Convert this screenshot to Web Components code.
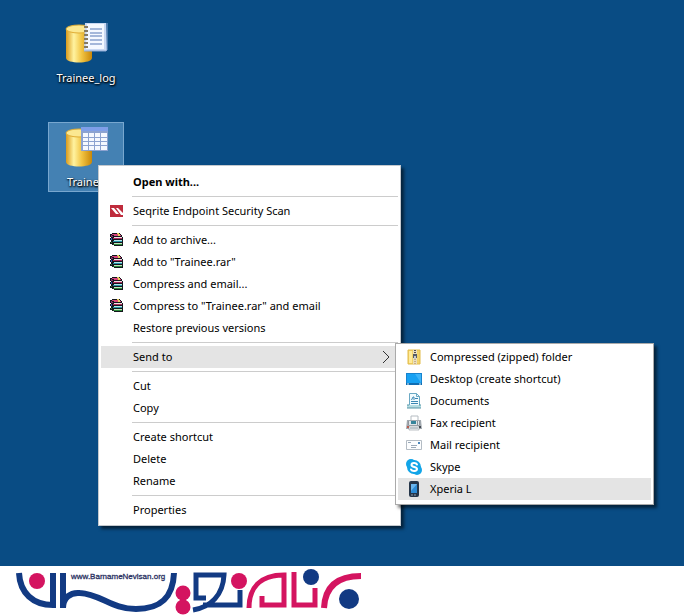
<!DOCTYPE html>
<html lang="en">
<head>
<meta charset="utf-8">
<title>Desktop</title>
<style>
  html, body { height: 100%; }
  body { margin: 0; background: #fff; font: 11px/22px "Noto Sans", "Open Sans", sans-serif; color: #000; }
</style>
</head>
<body>
<app-screen>
  <desktop-surface>
    <desktop-icon style="left:48px;top:18px" kind="log">Trainee_log</desktop-icon>
    <desktop-icon style="left:48px;top:122px" kind="table" selected>Trainee</desktop-icon>
    <context-menu style="left:98px;top:165px;width:303px" label="File menu">
      <menu-item bold>Open with...</menu-item>
      <menu-line></menu-line>
      <menu-item icon="seqrite">Seqrite Endpoint Security Scan</menu-item>
      <menu-line></menu-line>
      <menu-item icon="rar">Add to archive...</menu-item>
      <menu-item icon="rar">Add to "Trainee.rar"</menu-item>
      <menu-item icon="rar">Compress and email...</menu-item>
      <menu-item icon="rar">Compress to "Trainee.rar" and email</menu-item>
      <menu-item>Restore previous versions</menu-item>
      <menu-line></menu-line>
      <menu-item active arrow>Send to
        <context-menu slot="submenu" style="left:calc(100% - 3px);top:-3px;width:259px" flush label="Send to">
          <menu-item icon="zip">Compressed (zipped) folder</menu-item>
          <menu-item icon="desktop">Desktop (create shortcut)</menu-item>
          <menu-item icon="doc">Documents</menu-item>
          <menu-item icon="fax">Fax recipient</menu-item>
          <menu-item icon="mail">Mail recipient</menu-item>
          <menu-item icon="skype">Skype</menu-item>
          <menu-item icon="phone" active>Xperia L</menu-item>
        </context-menu>
      </menu-item>
      <menu-line></menu-line>
      <menu-item>Cut</menu-item>
      <menu-item>Copy</menu-item>
      <menu-line></menu-line>
      <menu-item>Create shortcut</menu-item>
      <menu-item>Delete</menu-item>
      <menu-item>Rename</menu-item>
      <menu-line></menu-line>
      <menu-item>Properties</menu-item>
    </context-menu>
  </desktop-surface>
  <brand-footer></brand-footer>
</app-screen>

<script>
const cylinder = `
  <defs><linearGradient id="g" x1="0" x2="1"><stop offset="0" stop-color="#d99a1c"/><stop offset=".3" stop-color="#fff3a0"/><stop offset=".6" stop-color="#f2c544"/><stop offset="1" stop-color="#c98708"/></linearGradient></defs>
  <path d="M4 10v29c0 6 26 6 26 0V10z" fill="url(#g)"/>
  <ellipse cx="17" cy="10" rx="13" ry="4" fill="#fbe891" stroke="#e0ad35"/>`;

const fileArt = {
  log: `<svg width="48" height="46" viewBox="0 0 48 46" aria-hidden="true">${cylinder}
    <path d="M23 4h21l1 28H22z" fill="#c9d8f2"/><path d="M25 5h17v25H24z" fill="#f4f8ff"/>
    <path d="M22 32h22l1-1V4" fill="none" stroke="#8ba7d4"/>
    <path d="M28 10h12M28 14h12M28 17h12M28 21h12M28 25h12" stroke="#5576b5"/>
    <path d="M22 8h4M22 12h4M22 16h4M22 20h4M22 24h4M22 28h4" stroke="#857a62" stroke-width="2"/></svg>`,
  table: `<svg width="48" height="46" viewBox="0 0 48 46" aria-hidden="true">${cylinder}
    <path d="M19 4h27v24H19z" fill="#8ca2d0"/><path d="M19 4h27v4H19z" fill="#7f9fe8"/>
    <path d="M21 10h5v4h-5zM27 10h5v4h-5zM33 10h5v4h-5zM39 10h6v4h-6zM21 15h5v3h-5zM27 15h5v3h-5zM33 15h5v3h-5zM39 15h6v3h-6zM21 19h5v3h-5zM27 19h5v3h-5zM33 19h5v3h-5zM39 19h6v3h-6zM21 23h5v4h-5zM27 23h5v4h-5zM33 23h5v4h-5zM39 23h6v4h-6z" fill="#f5f8ff"/></svg>`
};

const menuArt = {
  seqrite: `<path d="M1 2h13v12H1z" fill="#bf2b3c"/><path d="M2 5h3l5 6H7zM7 5h2l5 5v2h-2z" fill="#fff"/>`,
  rar: `<path d="M1 2h2V1h8v1h1v1h1v2h1v9H5v-1H3v-1H1v-2h1V8H1V6h1V5H1z" fill="#14161d"/>
    <path d="M3 2h8v1h1v1H5V3H3z" fill="#d8447c"/><path d="M8 1h2v1h1v2H9V2H8z" fill="#ead05c"/>
    <path d="M5 5h8v1H5z" fill="#f0dfe4"/><path d="M4 6h9v1H4z" fill="#b02a5e"/>
    <path d="M5 8h8v1H5z" fill="#b9e6ea"/><path d="M4 9h9v1H4z" fill="#2194a6"/>
    <path d="M5 11h8v1H5z" fill="#c4e4bd"/><path d="M4 12h9v1H5z" fill="#2c8a3a"/>
    <path d="M2 3h1v1h1v1H2z" fill="#8c2f6c"/><path d="M2 6h1v2H2z" fill="#3858c0"/><path d="M2 10h1v1H2z" fill="#2c8a3a"/>`,
  zip: `<path d="M2 1h12v14H2z" fill="#f2d36a"/><path d="M3 2h3v12H3z" fill="#ffeb9b"/><path d="M2 1h12v14H2z" fill="none" stroke="#e2bc4a"/>
    <path d="M7 1h4v14H7z" fill="#e9dfbd"/><path d="M9 1v8" stroke="#554d4d" stroke-width="2" stroke-dasharray="1 1"/>
    <path d="M7 5h4v4H7z" fill="#555b66"/><path d="M8 7h2v3H8z" fill="#c7cbd0"/><path d="M9 10v5" stroke="#a77c54" stroke-dasharray="1 1"/>`,
  desktop: `<path d="M0 2h16v12H0z" fill="#1783ce"/><path d="M1 3h14v9H1z" fill="#17a1f2"/><path d="M9 3h6v9z" fill="#3db4f8"/><path d="M0 13h16" stroke="#0b5795"/><path d="M1 13h2M13 13h2" stroke="#d9f0fb"/>`,
  doc: `<path d="M3.5 .5h7l3 3v10h-10z" fill="#f2fbfe" stroke="#6ba9c4"/><path d="M10.5 .5v3h3" fill="none" stroke="#6ba9c4"/>
    <path d="M5.5 7l1.5-3h1v3M9 5.5h3M5 8.5h7M5 10.5h7" fill="none" stroke="#3c87b3"/><path d="M1 12h14v3H1z" fill="#b5dce2"/><path d="M1 15h14M1 12h2M13 12h2" stroke="#5695a7"/>`,
  fax: `<path d="M5 1h7v5H5z" fill="#fff" stroke="#b5bcc2"/><path d="M1 5h14l1 9H0z" fill="#a2a9b0"/><path d="M2 6h12v4H2z" fill="#dfe5e9"/>
    <path d="M5 6h5v3H5z" fill="#36849b"/><path d="M2 7h2M11 7h3M2 9h2M11 9h3" stroke="#424b55" stroke-dasharray="1 1"/><path d="M3 11h10v4H3z" fill="#f7f9fa" stroke="#7a828a" stroke-width=".5"/><path d="M4 13h8" stroke="#87949e"/><path d="M1 11h2v2H1z" fill="#b85e50"/><path d="M13 11h2v2h-2z" fill="#454b52"/>`,
  mail: `<path d="M.5 3.5h15v9H.5z" fill="#fcfdfe" stroke="#b4bcc4"/><path d="M2 5.5h3M5 8.5h6M5 10.5h5" stroke="#9aa9b8"/><path d="M12 5h2v2h-2z" fill="#4a86bb"/>`,
  skype: `<circle cx="5" cy="5" r="5" fill="#12a5e8"/><circle cx="11" cy="11" r="5" fill="#12a5e8"/><circle cx="8" cy="8" r="7" fill="#12a5e8"/><path d="M11 5.5C10 3.5 5.5 3.5 5.5 6S11 7.5 11 10s-5 2.5-6 .5" fill="none" stroke="#fff" stroke-width="2" stroke-linecap="round"/>`,
  phone: `<rect x="3" y="0" width="10" height="16" rx="2" fill="#26364a"/><path d="M5 3h6v9H5z" fill="#2d8bd6"/><path d="M5 3h6L5 10z" fill="#69b5ef"/><path d="M5 14h6" stroke="#91a0b0" stroke-dasharray="2 1"/>`
};

class Part extends HTMLElement {
  connectedCallback() {
    if (this.shadowRoot) return;
    const tpl = document.createElement('template');
    tpl.innerHTML = this.render();
    this.attachShadow({ mode: 'open' }).append(tpl.content);
  }
}

customElements.define('app-screen', class extends Part {
  render() { return `<style>:host{display:flex;flex-direction:column;min-height:100vh}</style><slot></slot>`; }
});

customElements.define('desktop-surface', class extends Part {
  render() { return `<style>:host{display:block;position:relative;flex:1;background:#094c84}</style><slot></slot>`; }
});

customElements.define('desktop-icon', class extends Part {
  render() {
    return `<style>
      :host{position:absolute;display:block}
      button{display:flex;flex-direction:column;align-items:center;box-sizing:border-box;min-width:76px;height:70px;padding:0;border:1px solid transparent;background:none;font:inherit;line-height:22px;color:#fff;text-shadow:1px 1px 2px #000,0 1px 2px #000}
      :host([selected]) button{background:#4481b3;border-color:#78a7cf}
      svg{flex:none}
      span{margin-top:2px}
    </style><button type="button">${fileArt[this.getAttribute('kind')]}<span><slot></slot></span></button>`;
  }
});

customElements.define('context-menu', class extends Part {
  render() {
    return `<style>
      :host{position:absolute;display:block;box-sizing:border-box;z-index:1;padding:5px 2px 4px;border:1px solid #c4c9ce;background:#fff;box-shadow:3px 3px 3px rgba(0,0,0,.55)}
      :host([flush]){padding:2px 2px 4px;border-color:#aaa}
    </style><div role="menu" aria-label="${this.getAttribute('label')}"><slot></slot></div>`;
  }
});

customElements.define('menu-line', class extends Part {
  render() { return `<style>:host{display:block;padding:3px 0 3px 31px}hr{margin:0;border:0;border-top:1px solid #ccc}</style><hr>`; }
});

customElements.define('menu-item', class extends Part {
  render() {
    const art = menuArt[this.getAttribute('icon')];
    return `<style>
      :host{display:block;position:relative}
      button{display:grid;grid-template-columns:16px 1fr 8px;column-gap:8px;align-items:center;box-sizing:border-box;width:100%;height:22px;padding:0 8px;border:0;background:none;color:inherit;font:inherit;text-align:left;white-space:nowrap}
      :host([active]) button{background:#e4e4e4}
      :host([bold]) button{font-weight:700}
      svg{display:block}
    </style>
    <button type="button" role="menuitem">
      <svg width="16" height="16" viewBox="0 0 16 16" aria-hidden="true">${art || ''}</svg>
      <span><slot></slot></span>
      ${this.hasAttribute('arrow') ? '<svg width="8" height="14" viewBox="0 0 8 14" aria-hidden="true"><path d="M1 1l6 6-6 6" fill="none" stroke="#333"/></svg>' : ''}
    </button><slot name="submenu"></slot>`;
  }
});

customElements.define('brand-footer', class extends Part {
  render() {
    return `<style>
      :host{display:block;flex:none;background:#fff;padding-left:14px}
      a,svg{display:block}
      a{width:350px}
    </style>
    <a href="#" aria-label="BarnameNevisan">
      <svg width="350" height="50" viewBox="14 566 350 50">
        <g fill="none" stroke="#123a83" stroke-width="6">
          <path d="M19 573C20 593 33 605 53 605V573"/>
          <path d="M63 573v35C63 598 70 592 80 593C100 594 112 609 136 609C160 609 173 598 174 573"/>
          <path d="M206 598h-10V575H224C223 595 211 607 193 610M203 605h37V590" stroke-width="5"/>
        </g>
        <g fill="none" stroke="#d41460" stroke-width="5">
          <path d="M249 608C249 588 260 575 284 575V605H262v-9"/>
          <path d="M294 572v33H315V588"/>
          <path d="M324 608C325 587 337 576 361 576" stroke-width="6"/>
        </g>
        <g fill="#d41460"><circle cx="37" cy="581" r="8"/><circle cx="183" cy="593" r="7.5"/><circle cx="183" cy="607" r="7.5"/><circle cx="239" cy="581" r="8"/></g>
        <g fill="#123a83"><circle cx="311" cy="577" r="8"/><circle cx="349" cy="599" r="10"/></g>
        <text x="71" y="579" font-family="Liberation Sans, sans-serif" font-size="8" fill="#2b3263" stroke="#2b3263" stroke-width=".3">www.BarnameNevisan.org</text>
      </svg>
    </a>`;
  }
});
</script>
</body>
</html>
